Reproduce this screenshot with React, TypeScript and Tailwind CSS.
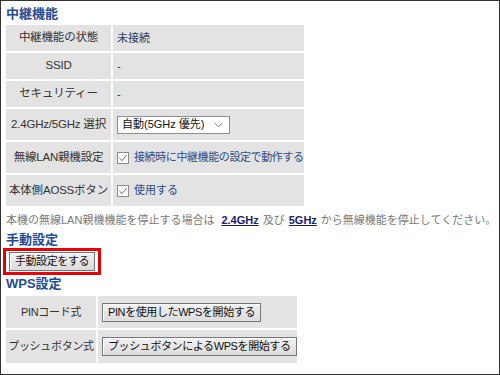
const FONT = { fontFamily: '"Liberation Sans", "Noto Sans CJK JP", sans-serif' };

const Check = () => (
  <span className="inline-flex h-[12px] w-[12px] shrink-0 items-center justify-center border border-[#8a8a8a] bg-white">
    <svg width="10" height="10" viewBox="0 0 10 10">
      <path d="M1.5 5.2 L4 7.6 L8.6 2.2" fill="none" stroke="#6a6a6a" strokeWidth="1" />
    </svg>
  </span>
);

const Btn = ({ children }: { children: React.ReactNode }) => (
  <span className="inline-flex h-[19px] items-center whitespace-nowrap border border-[#767676] bg-linear-to-b from-[#f2f2f2] to-[#dcdcdc] px-[5px] text-[11px] leading-none tracking-[-0.4px] text-[#111] shadow-[inset_1px_1px_0_#fff]">
    {children}
  </span>
);

const Heading = ({ children, h }: { children: React.ReactNode; h: string }) => (
  <div className={`flex items-center text-[13px] font-bold leading-none text-[#1f4a94] ${h}`}>{children}</div>
);

const relayRows: { label: string; value: React.ReactNode; tall?: boolean }[] = [
  { label: "中継機能の状態", value: <span className="text-[#2f4166]">未接続</span> },
  { label: "SSID", value: "-" },
  { label: "セキュリティー", value: "-" },
  {
    label: "2.4GHz/5GHz 選択",
    tall: true,
    value: (
      <span className="flex h-[18px] w-[113px] items-center justify-between border border-[#8f8f8f] bg-white pl-[4px] pr-[6px] text-[#111]">
        自動(5GHz 優先)
        <svg width="9" height="6" viewBox="0 0 9 6">
          <path d="M0.5 0.8 L4.5 4.8 L8.5 0.8" fill="none" stroke="#777" strokeWidth="1" />
        </svg>
      </span>
    ),
  },
  {
    label: "無線LAN親機設定",
    tall: true,
    value: (
      <span className="flex items-center gap-[5px] tracking-[-0.4px] text-[#2c4c86]">
        <Check />
        接続時に中継機能の設定で動作する
      </span>
    ),
  },
  {
    label: "本体側AOSSボタン",
    tall: true,
    value: (
      <span className="flex items-center gap-[5px] text-[#2c4c86]">
        <Check />
        使用する
      </span>
    ),
  },
];

const App = () => {
  return (
    <div className="h-[375px] w-[500px] overflow-hidden border border-[#333] bg-white pl-[5px] text-[12px] text-[#333]" style={FONT}>
      <Heading h="h-[24px] pt-[1px]">中継機能</Heading>

      <div className="grid w-[298px] grid-cols-[105px_191px] gap-[2px] bg-white whitespace-nowrap">
        {relayRows.map(({ label, value, tall }) => (
          <div key={label} className="contents">
            <div className={`flex items-center justify-center bg-[#e3e3e3] text-[11.5px] tracking-[-0.2px] ${tall ? "h-[31px]" : "h-[26px]"}`}>{label}</div>
            <div className={`flex items-center bg-[#e3e3e3] pl-[4px] text-[11px] ${tall ? "h-[31px]" : "h-[26px]"}`}>{value}</div>
          </div>
        ))}
      </div>

      <div className="mt-[4px] flex h-[21px] items-center whitespace-nowrap text-[11px] text-[#7a7a7a]">
        本機の無線LAN親機機能を停止する場合は
        <a className="ml-[7px] mr-[4px] font-bold text-[#1c1c6b] underline">2.4GHz</a>
        及び
        <a className="ml-[4px] mr-[4px] font-bold text-[#1c1c6b] underline">5GHz</a>
        から無線機能を停止してください。
      </div>

      <Heading h="h-[16px]">手動設定</Heading>

      <div className="-ml-[3px] mt-[1px] flex h-[27px] w-[98px] items-center justify-center border-[3px] border-[#e60000]">
        <Btn>手動設定をする</Btn>
      </div>

      <Heading h="h-[16px]">WPS設定</Heading>

      <div className="mt-[5px] grid w-[291px] grid-cols-[90px_199px] gap-[2px] whitespace-nowrap bg-white text-[11px] tracking-[-0.3px]">
        <div className="flex h-[32px] items-center justify-center bg-[#e3e3e3]">PINコード式</div>
        <div className="flex h-[32px] items-center bg-[#e3e3e3] pl-[4px]">
          <Btn>PINを使用したWPSを開始する</Btn>
        </div>
        <div className="flex h-[33px] items-center justify-center bg-[#e3e3e3]">プッシュボタン式</div>
        <div className="flex h-[33px] items-center bg-[#e3e3e3] pl-[4px]">
          <Btn>プッシュボタンによるWPSを開始する</Btn>
        </div>
      </div>
    </div>
  );
};

export default App;
